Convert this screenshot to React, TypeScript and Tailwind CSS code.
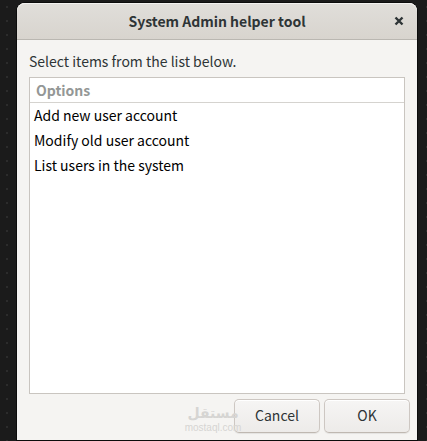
import React from 'react';

interface ActionButtonProps {
  label: string;
}

const options = [
  'Add new user account',
  'Modify old user account',
  'List users in the system',
];

const ActionButton: React.FC<ActionButtonProps> = ({ label }) => (
  <button
    type="button"
    className="w-[86px] h-[34px] pb-0.5 rounded-[5px] border border-[#cdc7c2] border-b-[#bfb8b1] bg-linear-to-b from-[#f6f5f4] to-[#edebe9] shadow-[inset_0_1px_#fff,0_1px_1px_#00000012] text-[#2e3436]"
  >
    {label}
  </button>
);

const TitleBar: React.FC = () => (
  <header className="relative flex items-center justify-center h-[37px] rounded-t-lg border-b border-[#bab7b1] bg-linear-to-b from-[#e0deda] to-[#d8d4ce] shadow-[inset_0_1px_#f3f2f0]">
    <h1 className="font-bold">System Admin helper tool</h1>
    <button type="button" aria-label="Close" className="absolute right-3 top-3 p-px">
      <svg width="10" height="10" viewBox="0 0 10 10" fill="none" stroke="#2e3436" strokeWidth="2.4">
        <path d="M1.5 1.5 8.5 8.5M8.5 1.5 1.5 8.5" />
      </svg>
    </button>
  </header>
);

// Faint site mark, sits partly over the Cancel button
const Watermark: React.FC = () => (
  <div className="absolute right-[178px] bottom-2 w-[52px] flex flex-col items-center text-[#d6d5d3] pointer-events-none">
    <p dir="rtl" lang="ar" className="font-['DejaVu_Sans',sans-serif] font-bold text-sm leading-5 whitespace-nowrap">مستقل</p>
    <p className="font-['Liberation_Sans',sans-serif] text-[10px] leading-[9px] whitespace-nowrap">mostaql.com</p>
  </div>
);

const App: React.FC = () => {
  return (
    <div className="min-h-screen flex flex-col bg-[#1b1b1b] bg-[radial-gradient(#2c2c2c_1px,transparent_1px)] bg-size-[14px_14px] pl-[17px] pr-[10px] pt-[3px] pb-px font-['Noto_Sans_CJK_SC',sans-serif] text-sm leading-5 text-[#2e3436]">
      <main className="relative flex-1 flex flex-col rounded-t-lg bg-[#f5f4f2] shadow-[0_0_0_1px_#0c0c0c]">
        <TitleBar />
        <p className="px-3 pt-[11px] pb-1.5">Select items from the list below.</p>
        <div className="flex-1 mx-3 border border-[#c9c5c0] bg-white">
          <table className="w-full text-left">
            <thead>
              <tr className="h-6 border-b border-[#d5d3cf]">
                <th className="px-1.5 font-bold text-[#949796]">Options</th>
              </tr>
            </thead>
            <tbody className="text-black">
              {options.map((option) => (
                <tr key={option} className="h-[25px]">
                  <td className="px-1">{option}</td>
                </tr>
              ))}
            </tbody>
          </table>
        </div>
        <div className="flex justify-end gap-1 pt-[5px] pb-[7px] px-[7px]">
          <ActionButton label="Cancel" />
          <ActionButton label="OK" />
        </div>
        <Watermark />
      </main>
    </div>
  );
};

export default App;
